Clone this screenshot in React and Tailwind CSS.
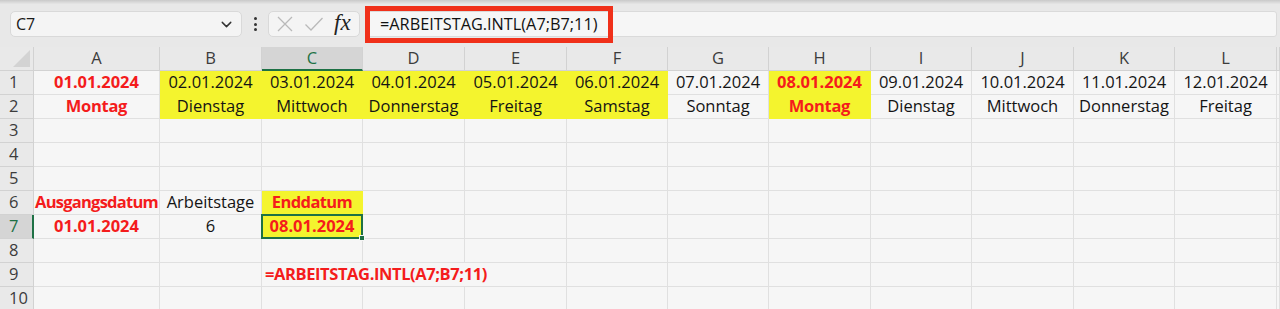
import React from "react";
import { ChevronDown } from "lucide-react";

const COLS = ["A", "B", "C", "D", "E", "F", "G", "H", "I", "J", "K", "L", ""];

const N = "n"; // normal
const R = "r"; // red bold
const Y = "y"; // yellow + normal
const YR = "yr"; // yellow + red bold

const dates = ["01.01.2024","02.01.2024","03.01.2024","04.01.2024","05.01.2024","06.01.2024","07.01.2024","08.01.2024","09.01.2024","10.01.2024","11.01.2024","12.01.2024"];
const days = ["Montag","Dienstag","Mittwoch","Donnerstag","Freitag","Samstag","Sonntag","Montag","Dienstag","Mittwoch","Donnerstag","Freitag"];
const styles1 = [R, Y, Y, Y, Y, Y, N, YR, N, N, N, N];

function rowCells(r) {
  const cells = Array.from({ length: 13 }, () => ({ t: "", s: N }));
  if (r === 1) dates.forEach((d, i) => (cells[i] = { t: d, s: styles1[i] }));
  if (r === 2)
    days.forEach(
      (d, i) => (cells[i] = { t: d, s: styles1[i], tr: styles1[i] === R || styles1[i] === YR ? "tracking-[-0.3px]" : "" })
    );
  if (r === 6) {
    cells[0] = { t: "Ausgangsdatum", s: R, tr: "tracking-[-0.75px]" };
    cells[1] = { t: "Arbeitstage", s: N };
    cells[2] = { t: "Enddatum", s: YR, tr: "tracking-[-0.6px]" };
  }
  if (r === 7) {
    cells[0] = { t: "01.01.2024", s: R };
    cells[1] = { t: "6", s: N };
    cells[2] = { t: "08.01.2024", s: YR, sel: true };
  }
  if (r === 9) {
    cells[2] = { t: "=ARBEITSTAG.INTL(A7;B7;11)", s: R, left: true, noR: true, tr: "tracking-[-0.4px]" };
    cells[3] = { t: "", s: N, noR: true };
  }
  return cells;
}

function Cell({ c }) {
  const yellow = c.s === Y || c.s === YR;
  const red = c.s === R || c.s === YR;
  const cls = [
    "relative h-[24px] border-b flex items-center whitespace-nowrap text-[16.5px]",
    c.noR ? "" : "border-r",
    yellow ? "bg-[#f4f42e] border-[#f4f42e]" : "bg-[#f6f6f6] border-[#e0e0e0]",
    red ? "text-[#f41c1c] font-bold" : "text-[#141414]",
    c.left
      ? "justify-start pl-[3px] overflow-visible z-10"
      : c.sel
      ? "justify-center overflow-visible z-20"
      : "justify-center overflow-hidden",
  ].join(" ");
  return (
    <div className={cls}>
      <span className={c.tr || ""}>{c.t}</span>
      {c.sel && (
        <>
          <div className="absolute -left-[1px] -top-[1px] -right-[1px] -bottom-[1px] border-2 border-[#1e7145] pointer-events-none" />
          <div className="absolute -right-[3px] -bottom-[3px] w-[6px] h-[6px] bg-[#1e7145] border border-[#f6f6f6]" />
        </>
      )}
    </div>
  );
}

export default function App() {
  const rows = [1, 2, 3, 4, 5, 6, 7, 8, 9, 10];
  return (
    <div
      className="relative w-[1280px] h-[309px] overflow-hidden bg-[#e8e8e8]"
      style={{ fontFamily: '"Open Sans", "Noto Sans", sans-serif' }}
    >
      {/* top strip */}
      <div className="h-[4px] bg-gradient-to-b from-[#c9c9c9] to-[#e6e6e6]" />

      {/* formula toolbar */}
      <div className="h-[43px] flex items-start pt-[7px] pl-[10px] pr-[3px]">
        <div className="w-[232px] h-[26px] rounded-[5px] bg-[#f4f4f4] border border-[#d9d9d9] flex items-center justify-between pl-[5px] pr-[6px]">
          <span className="text-[16px] text-[#1a1a1a]">C7</span>
          <ChevronDown size={17} strokeWidth={2} className="text-[#333]" />
        </div>
        <div className="w-[26px] h-[26px] flex flex-col items-center justify-center gap-[2.5px]">
          <div className="w-[3px] h-[3px] rounded-full bg-[#333]" />
          <div className="w-[3px] h-[3px] rounded-full bg-[#333]" />
          <div className="w-[3px] h-[3px] rounded-full bg-[#333]" />
        </div>
        <div className="w-[92px] h-[26px] rounded-[5px] bg-[#f4f4f4] border border-[#d9d9d9] flex items-center pl-[7px]">
          <svg width="18" height="18" viewBox="0 0 18 18" className="mr-[10px]">
            <path d="M2 2 L16 16 M16 2 L2 16" stroke="#b9b9b9" strokeWidth="1.3" fill="none" />
          </svg>
          <svg width="20" height="18" viewBox="0 0 20 18" className="mr-[10px]">
            <path d="M1.5 9.5 L7 15 L18.5 3" stroke="#b9b9b9" strokeWidth="1.3" fill="none" />
          </svg>
          <span
            className="text-[23px] italic text-[#222] leading-none -mt-[3px]"
            style={{ fontFamily: '"Liberation Serif", "DejaVu Serif", serif' }}
          >
            fx
          </span>
        </div>
        <div className="ml-[5px] flex-1 h-[26px] bg-[#f6f6f6] border border-[#dadada] rounded-[3px] flex items-center pl-[14px]">
          <span className="text-[16.3px] text-[#111]">=ARBEITSTAG.INTL(A7;B7;11)</span>
        </div>
      </div>

      {/* red annotation box */}
      <div className="absolute left-[365px] top-[6px] w-[248px] h-[37px] border-[5px] border-[#f0301a] pointer-events-none" />

      {/* grid */}
      <div className="grid grid-cols-[34px_126px_102px_101px_102px_102px_101px_101px_102px_101px_102px_101px_102px_1fr]">
        {/* header row */}
        <div className="relative h-[24px] bg-[#e9e9e9] border-b border-r border-[#d2d2d2]">
          <div
            className="absolute right-[3px] bottom-[3px] w-[17px] h-[17px] bg-[#d3d3d3]"
            style={{ clipPath: "polygon(100% 0, 100% 100%, 0 100%)" }}
          />
        </div>
        {COLS.map((c, i) => (
          <div
            key={i}
            className={
              "h-[24px] flex items-center justify-center text-[16.5px] border-r " +
              (c === "C"
                ? "bg-[#d5d5d5] text-[#1e7145] border-b-2 border-b-[#1e7145] border-r-[#d2d2d2]"
                : "bg-[#e9e9e9] text-[#3c3c3c] border-b border-[#d2d2d2]")
            }
          >
            {c}
          </div>
        ))}

        {rows.map((r) => (
          <React.Fragment key={r}>
            <div
              className={
                "h-[24px] flex items-center pl-[9px] text-[16.5px] border-b border-[#d2d2d2] " +
                (r === 7
                  ? "bg-[#d5d5d5] text-[#1e7145] border-r-2 border-r-[#1e7145]"
                  : "bg-[#e9e9e9] text-[#3c3c3c] border-r")
              }
            >
              {r}
            </div>
            {rowCells(r).map((c, i) => (
              <Cell key={i} c={c} />
            ))}
          </React.Fragment>
        ))}
      </div>
    </div>
  );
}
